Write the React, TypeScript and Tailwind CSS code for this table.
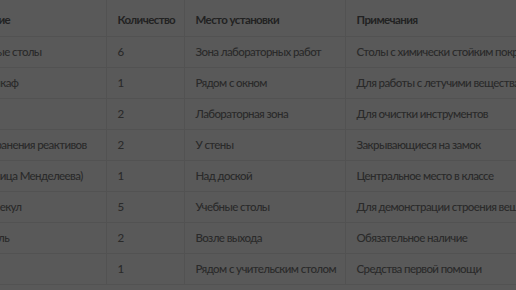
import React from "react";

type Item = { name: string; qty: string; place: string; note: string };

const items: Item[] = [
  { name: "Лабораторные столы", qty: "6", place: "Зона лабораторных работ", note: "Столы с химически стойким покрытием" },
  { name: "Вытяжной шкаф", qty: "1", place: "Рядом с окном", note: "Для работы с летучими веществами" },
  { name: "Раковина", qty: "2", place: "Лабораторная зона", note: "Для очистки инструментов" },
  { name: "Шкаф для хранения реактивов", qty: "2", place: "У стены", note: "Закрывающиеся на замок" },
  { name: "Плакат (Таблица Менделеева)", qty: "1", place: "Над доской", note: "Центральное место в классе" },
  { name: "Модели молекул", qty: "5", place: "Учебные столы", note: "Для демонстрации строения веществ" },
  { name: "Огнетушитель", qty: "2", place: "Возле выхода", note: "Обязательное наличие" },
  { name: "Аптечка", qty: "1", place: "Рядом с учительским столом", note: "Средства первой помощи" },
];

const th = "px-[11px] pt-[4px] text-left font-bold text-[#222222]";
const td = "px-[11px] whitespace-nowrap overflow-visible";

export default function App() {
  return (
    <div className="w-[516px] h-[290px] overflow-hidden bg-[#595959] text-[11.5px] font-medium tracking-[-0.6px] text-[#2a2a2a] [font-family:Lato,sans-serif]">
      <table className="ml-[-73px] w-[678px] table-fixed border-collapse">
        <colgroup>
          <col className="w-[179px]" />
          <col className="w-[78px]" />
          <col className="w-[161px]" />
          <col className="w-[260px]" />
        </colgroup>
        <thead>
          <tr className="h-[36px] border-b border-[#525252]">
            <th className={`${th} border-r border-[#525252]`}>Оборудование</th>
            <th className={`${th} border-r border-[#525252]`}>Количество</th>
            <th className={`${th} border-r border-[#525252]`}>Место установки</th>
            <th className={th}>Примечания</th>
          </tr>
        </thead>
        <tbody>
          {items.map((it) => (
            <tr key={it.name} className="h-[31px] border-b border-[#525252]">
              <td className={`${td} border-r border-[#525252]`}>{it.name}</td>
              <td className={`${td} border-r border-[#525252]`}>{it.qty}</td>
              <td className={`${td} border-r border-[#525252]`}>{it.place}</td>
              <td className={td}>{it.note}</td>
            </tr>
          ))}
        </tbody>
      </table>
    </div>
  );
}
